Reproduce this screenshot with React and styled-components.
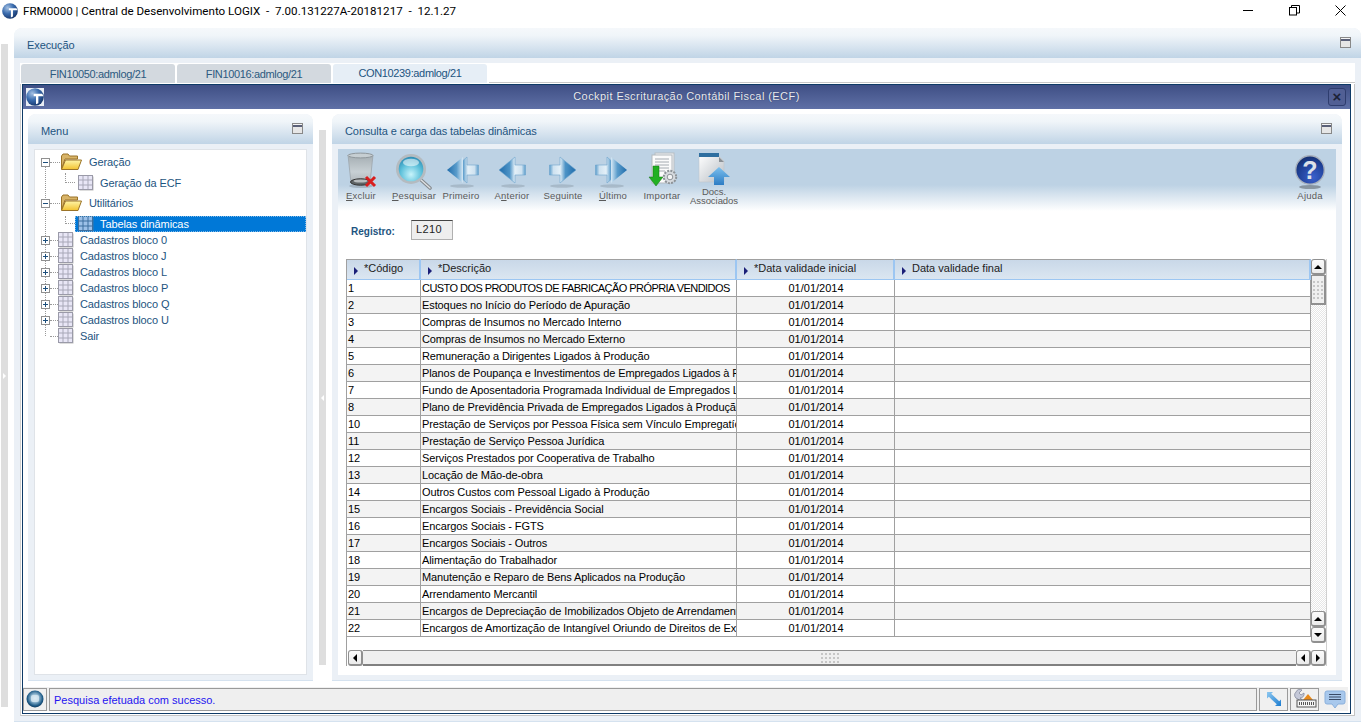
import styled, { createGlobalStyle } from "styled-components";

const GlobalStyle = createGlobalStyle`
  html, body { margin: 0; padding: 0; background: #fff; }
  * { box-sizing: border-box; }
  body { font-family: "Liberation Sans", Arial, sans-serif; font-size: 11px; overflow: hidden; }
`;

const rows = [
  ["1", "CUSTO DOS PRODUTOS DE FABRICAÇÃO PRÓPRIA VENDIDOS"],
  ["2", "Estoques no Início do Período de Apuração"],
  ["3", "Compras de Insumos no Mercado Interno"],
  ["4", "Compras de Insumos no Mercado Externo"],
  ["5", "Remuneração a Dirigentes Ligados à Produção"],
  ["6", "Planos de Poupança e Investimentos de Empregados Ligados à Produção"],
  ["7", "Fundo de Aposentadoria Programada Individual de Empregados Ligados à Produção"],
  ["8", "Plano de Previdência Privada de Empregados Ligados à Produção"],
  ["10", "Prestação de Serviços por Pessoa Física sem Vínculo Empregatício"],
  ["11", "Prestação de Serviço Pessoa Jurídica"],
  ["12", "Serviços Prestados por Cooperativa de Trabalho"],
  ["13", "Locação de Mão-de-obra"],
  ["14", "Outros Custos com Pessoal Ligado à Produção"],
  ["15", "Encargos Sociais - Previdência Social"],
  ["16", "Encargos Sociais - FGTS"],
  ["17", "Encargos Sociais - Outros"],
  ["18", "Alimentação do Trabalhador"],
  ["19", "Manutenção e Reparo de Bens Aplicados na Produção"],
  ["20", "Arrendamento Mercantil"],
  ["21", "Encargos de Depreciação de Imobilizados Objeto de Arrendamento"],
  ["22", "Encargos de Amortização de Intangível Oriundo de Direitos de Exploração"],
];

const blocks = ["0", "J", "L", "P", "Q", "U"];

/* ---------- icons ---------- */

const Globe = ({ size = 16, id = "g1" }) => (
  <svg width={size} height={size} viewBox="0 0 20 20">
    <defs>
      <radialGradient id={id} cx="35%" cy="30%" r="75%">
        <stop offset="0" stopColor="#a4c0e2" />
        <stop offset="0.5" stopColor="#3a6cae" />
        <stop offset="1" stopColor="#17356a" />
      </radialGradient>
    </defs>
    <circle cx="10" cy="10" r="9.8" fill={`url(#${id})`} />
    <path d="M8.5 6.5h9.5a9.8 9.8 0 0 1 1.3 2.6h-5.6V17l-2.6 1V9.1H8.5z" fill="#fff" />
  </svg>
);

const Orb = () => (
  <svg width="18" height="18" viewBox="0 0 18 18">
    <defs>
      <radialGradient id="orb" cx="50%" cy="45%" r="60%">
        <stop offset="0" stopColor="#e8f2f8" />
        <stop offset="0.4" stopColor="#8fb6d0" />
        <stop offset="0.75" stopColor="#1d5a86" />
        <stop offset="1" stopColor="#0a2a4a" />
      </radialGradient>
    </defs>
    <circle cx="9" cy="9" r="8.5" fill="url(#orb)" />
    <rect x="5" y="5" width="8" height="7" rx="2" fill="#d8e8f2" opacity="0.8" />
  </svg>
);

const GridIcon = ({ $selected }) => (
  <svg width="16" height="16" viewBox="0 0 16 16">
    <rect x="1.5" y="1.5" width="14" height="14" fill="#777" opacity="0.5" />
    <rect x="0.5" y="0.5" width="14" height="14" fill={$selected ? "#9cc0e8" : "#e8e6f6"} stroke={$selected ? "#3d6f9f" : "#9a9aa8"} />
    <path d="M5 1v13M10 1v13M1 5h13M1 10h13" stroke={$selected ? "#3d6f9f" : "#a8a8b8"} />
  </svg>
);

const FolderIcon = () => (
  <svg width="22" height="18" viewBox="0 0 22 18">
    <defs>
      <linearGradient id="fold" x1="0" y1="0" x2="0" y2="1">
        <stop offset="0" stopColor="#fff6a8" />
        <stop offset="1" stopColor="#f2c230" />
      </linearGradient>
    </defs>
    <path d="M1.5 16V3l1.5-2h5l1.5 2h8v3H5L1.5 16z" fill="#d8b468" stroke="#9a7328" />
    <path d="M1.5 16.5L5.5 7h16l-3.5 9.5z" fill="url(#fold)" stroke="#9a7328" />
  </svg>
);

const Trash = () => (
  <svg width="32" height="38" viewBox="0 0 32 38">
    <defs>
      <linearGradient id="bin" x1="0" y1="0" x2="0" y2="1">
        <stop offset="0" stopColor="#a4adb2" />
        <stop offset="0.6" stopColor="#c8d0d4" />
        <stop offset="1" stopColor="#aeb5b8" />
      </linearGradient>
    </defs>
    <ellipse cx="16" cy="34" rx="12" ry="2" fill="#000" opacity="0.15" />
    <path d="M3 3l3 28h19l3-28z" fill="url(#bin)" stroke="#98a0a6" strokeWidth="0.7" />
    <ellipse cx="15.5" cy="3.5" rx="12.5" ry="2.4" fill="#c6ced2" stroke="#8f979c" />
    <ellipse cx="15.5" cy="30" rx="10" ry="3.2" fill="#5f6466" stroke="#333" />
    <ellipse cx="15.5" cy="29" rx="7" ry="1.6" fill="#b8bcbe" />
    <path d="M21 25l9 9M30 25l-9 9" stroke="#d81e1e" strokeWidth="3" />
  </svg>
);

const Magnifier = () => (
  <svg width="38" height="36" viewBox="0 0 38 36">
    <defs>
      <radialGradient id="lens" cx="50%" cy="72%" r="72%">
        <stop offset="0" stopColor="#c8f4fb" />
        <stop offset="0.6" stopColor="#5cc0da" />
        <stop offset="1" stopColor="#2c8cb4" />
      </radialGradient>
    </defs>
    <path d="M25 25l10 9" stroke="#858a8f" strokeWidth="3.6" strokeLinecap="round" />
    <path d="M25 25l10 9" stroke="#dfe2e4" strokeWidth="1.3" strokeLinecap="round" />
    <circle cx="16" cy="15" r="15" fill="#b4bbc0" />
    <circle cx="16" cy="15" r="12.3" fill="url(#lens)" />
    <ellipse cx="16" cy="8.5" rx="8" ry="3.8" fill="#fff" opacity="0.55" />
  </svg>
);

/* points left unless $flip is set; $double adds the second head */
const Arrow = ({ $flip, $double, id }) => {
  const w = $double ? 36 : 30;
  return (
    <svg width={w} height="36" viewBox={`0 0 ${w} 36`}>
      <defs>
        <linearGradient id={id} x1="0" y1="0" x2="1" y2="0">
          <stop offset="0" stopColor="#1f6cab" />
          <stop offset="0.4" stopColor="#4d93c6" />
          <stop offset="0.6" stopColor="#e4f0f8" />
          <stop offset="0.85" stopColor="#cfe2f0" />
          <stop offset="1" stopColor="#5a9ccb" />
        </linearGradient>
        <linearGradient id={`${id}h`} x1="0" y1="0" x2="1" y2="0">
          <stop offset="0" stopColor="#1f6cab" />
          <stop offset="0.6" stopColor="#5a9ccb" />
          <stop offset="1" stopColor="#d8e9f5" />
        </linearGradient>
      </defs>
      <g transform={$flip ? `translate(${w},0) scale(-1,1)` : undefined}>
        <ellipse cx={w / 2 + 1} cy="32" rx="12" ry="1.8" fill="#000" opacity="0.12" />
        {$double ? (
          <>
            <path d="M24 3L9 16l15 13V21h11.5v-10H24z" fill={`url(#${id})`} stroke="#6fa5cc" strokeWidth="0.6" />
            <path d="M20 3L4 16l16 13z" fill={`url(#${id}h)`} />
          </>
        ) : (
          <path d="M18 3L2 16l16 13V21h10.5v-10H18z" fill={`url(#${id})`} stroke="#6fa5cc" strokeWidth="0.6" />
        )}
      </g>
    </svg>
  );
};

const ImportIcon = () => (
  <svg width="32" height="38" viewBox="0 0 32 38">
    <rect x="9" y="1" width="19" height="26" fill="#eef0f2" stroke="#b8bdc2" />
    <rect x="6" y="3" width="20" height="28" fill="#fbfbfb" stroke="#b4b9be" />
    <path d="M9 7h14M9 10h14M9 13h14M9 16h14M9 19h10" stroke="#a4aab0" />
    <path d="M7 14h6v11h4l-7 9-7-9h4z" fill="#22b022" stroke="#167016" strokeWidth="0.5" />
    <circle cx="24" cy="25" r="6.2" fill="#d6dade" stroke="#8d9398" strokeDasharray="2 1.2" strokeWidth="2" />
    <circle cx="24" cy="25" r="2.8" fill="#f4f5f6" stroke="#8d9398" />
  </svg>
);

const DocsIcon = () => (
  <svg width="32" height="38" viewBox="0 0 32 38">
    <defs>
      <linearGradient id="doc" x1="0" y1="0" x2="1" y2="1">
        <stop offset="0" stopColor="#ffffff" />
        <stop offset="1" stopColor="#b8bec4" />
      </linearGradient>
      <linearGradient id="up" x1="0" y1="0" x2="0" y2="1">
        <stop offset="0" stopColor="#7cc0ee" />
        <stop offset="1" stopColor="#2c7cc4" />
      </linearGradient>
    </defs>
    <path d="M1 3h19l6 6v21H1z" fill="url(#doc)" stroke="#c0c6cc" strokeWidth="0.6" />
    <rect x="1" y="1" width="20" height="4" fill="#2f6fa0" />
    <path d="M21 5l5 5h-5z" fill="#8a9096" />
    <path d="M21 15l11 10h-6v8H16v-8h-6z" fill="url(#up)" />
  </svg>
);

const HelpIcon = () => (
  <svg width="32" height="36" viewBox="0 0 32 36">
    <defs>
      <radialGradient id="help" cx="60%" cy="75%" r="75%">
        <stop offset="0" stopColor="#3a60cc" />
        <stop offset="0.7" stopColor="#1e3f94" />
        <stop offset="1" stopColor="#16306e" />
      </radialGradient>
    </defs>
    <ellipse cx="16" cy="33" rx="11" ry="2" fill="#000" opacity="0.3" />
    <circle cx="16" cy="16" r="14.3" fill="url(#help)" stroke="#a8b0bc" strokeWidth="1.4" />
    <text x="16" y="25" textAnchor="middle" fontFamily="Liberation Sans, sans-serif" fontWeight="700" fontSize="25" fill="#dde1e8">?</text>
  </svg>
);

const ResizeIcon = () => (
  <svg width="16" height="16" viewBox="0 0 16 16">
    <defs>
      <linearGradient id="rz" x1="0" y1="0" x2="1" y2="1">
        <stop offset="0" stopColor="#8ec8f0" />
        <stop offset="1" stopColor="#1c7cd0" />
      </linearGradient>
    </defs>
    <path d="M1 1h6L5.2 2.8l8 7.4L15 8.5V15H9l1.8-1.8-8-7.4L1 7.5z" fill="url(#rz)" />
  </svg>
);

const ConfigIcon = () => (
  <svg width="24" height="20" viewBox="0 0 24 20">
    <path d="M3 3a4 4 0 0 1 6-2L6 4l2 2 3-2a4 4 0 0 1-4 5l6 5-2 2-6-6a4 4 0 0 1-2-7z" fill="#c4c8d8" stroke="#7d8296" strokeWidth="0.7" />
    <path d="M15 5l5 6H10z" fill="#e88a1c" />
    <rect x="4" y="11" width="19" height="7" fill="#f4f4f4" stroke="#555" />
    <path d="M6 14.5h15" stroke="#555" strokeDasharray="1 1" strokeWidth="3" />
  </svg>
);

const ChatIcon = () => (
  <svg width="22" height="19" viewBox="0 0 22 19">
    <path d="M3 1h16a2 2 0 0 1 2 2v9a2 2 0 0 1-2 2h-5l-3 4-3-4H3a2 2 0 0 1-2-2V3a2 2 0 0 1 2-2z" fill="#a8c8ec" stroke="#8ab0dc" />
    <path d="M5 4.5h12M5 7h12M5 9.5h12" stroke="#3a4a66" />
  </svg>
);

const WinMin = () => (
  <svg width="11" height="11" viewBox="0 0 11 11"><path d="M0 5.5h10" stroke="#000" /></svg>
);
const WinRestore = () => (
  <svg width="11" height="11" viewBox="0 0 11 11" fill="none" stroke="#000">
    <rect x="0.5" y="2.5" width="7" height="7.5" />
    <path d="M2.5 2.5V0.5h8v7.5H8" />
  </svg>
);
const WinClose = () => (
  <svg width="11" height="11" viewBox="0 0 11 11"><path d="M0.5 0.5l10 10M10.5 0.5l-10 10" stroke="#000" /></svg>
);

/* ---------- components ---------- */

const Tree = ({ children }) => <TreeBox>{children}</TreeBox>;

const App = () => {
  return (
    <Page>
      <GlobalStyle />
      <TitleBar>
        <LogoSlot><Globe id="g-title" /></LogoSlot>
        <TitleText>{"FRM0000 | Central de Desenvolvimento LOGIX  -  7.00.131227A-20181217  -  12.1.27"}</TitleText>
        <WinButtons>
          <WinButton><WinMin /></WinButton>
          <WinButton><WinRestore /></WinButton>
          <WinButton><WinClose /></WinButton>
        </WinButtons>
      </TitleBar>
      <Main>
        <SideStrip><Nub /></SideStrip>
        <Outer>
          <PanelHead>
            <HeadTitle>Execução</HeadTitle>
            <Collapse />
          </PanelHead>
          <OuterBody>
            <TabRow>
              <Tab>FIN10050:admlog/21</Tab>
              <Tab>FIN10016:admlog/21</Tab>
              <Tab $active>CON10239:admlog/21</Tab>
              <TabFill />
            </TabRow>
            <TabPage>
              <Window>
                <WindowTitle>
                  <WindowLogo><Globe size={18} id="g-win" /></WindowLogo>
                  <WindowCaption>Cockpit Escrituração Contábil Fiscal (ECF)</WindowCaption>
                  <CloseBtn>×</CloseBtn>
                </WindowTitle>
                <WindowBody>
                  <Panel $w={285}>
                    <PanelHead>
                      <HeadTitle>Menu</HeadTitle>
                      <Collapse />
                    </PanelHead>
                    <PanelBody>
                      <Tree>
                        <TreeRail />
                        <FolderRow>
                          <Expander $open />
                          <HDots $w={10} />
                          <FolderIcon />
                          <FolderLabel>Geração</FolderLabel>
                        </FolderRow>
                        <ChildRow $mt={1} $h={20}>
                          <Elbow $h={10} />
                          <ChildBody>
                            <GridIcon />
                            <NodeLabel>Geração da ECF</NodeLabel>
                          </ChildBody>
                        </ChildRow>
                        <FolderRow>
                          <Expander $open />
                          <HDots $w={10} />
                          <FolderIcon />
                          <FolderLabel>Utilitários</FolderLabel>
                        </FolderRow>
                        <ChildRow $mt={3} $h={16}>
                          <Elbow $h={8} />
                          <ChildBody $selected>
                            <GridIcon $selected />
                            <NodeLabel $selected>Tabelas dinâmicas</NodeLabel>
                          </ChildBody>
                        </ChildRow>
                        {blocks.map((b) => (
                          <BlockRow key={b}>
                            <Expander />
                            <HDots $w={8} />
                            <GridIcon />
                            <NodeLabel>Cadastros bloco {b}</NodeLabel>
                          </BlockRow>
                        ))}
                        <BlockRow>
                          <ExpanderGap />
                          <HDots $w={8} />
                          <GridIcon />
                          <NodeLabel>Sair</NodeLabel>
                        </BlockRow>
                      </Tree>
                    </PanelBody>
                  </Panel>
                  <Splitter><Nub $left /></Splitter>
                  <Panel $w={1010}>
                    <PanelHead>
                      <HeadTitle>Consulta e carga das tabelas dinâmicas</HeadTitle>
                      <Collapse />
                    </PanelHead>
                    <PanelBody>
                      <Sheet>
                        <Toolbar>
                          <Tool $w={46}><IconSlot><Trash /></IconSlot><ToolLabel><u>E</u>xcluir</ToolLabel></Tool>
                          <Tool $w={60}><IconSlot><Magnifier /></IconSlot><ToolLabel><u>P</u>esquisar</ToolLabel></Tool>
                          <Tool $w={34}><IconSlot><Arrow $double id="a1" /></IconSlot><ToolLabel>Primeiro</ToolLabel></Tool>
                          <Tool $w={68}><IconSlot><Arrow id="a2" /></IconSlot><ToolLabel>A<u>n</u>terior</ToolLabel></Tool>
                          <Tool $w={34}><IconSlot><Arrow $flip id="a3" /></IconSlot><ToolLabel>Se<u>g</u>uinte</ToolLabel></Tool>
                          <Tool $w={66}><IconSlot><Arrow $flip $double id="a4" /></IconSlot><ToolLabel><u>Ú</u>ltimo</ToolLabel></Tool>
                          <Tool $w={32}><IconSlot><ImportIcon /></IconSlot><ToolLabel>Importar</ToolLabel></Tool>
                          <Tool $w={72}><IconSlot><DocsIcon /></IconSlot><ToolLabel $tight>Docs.<br />Associados</ToolLabel></Tool>
                          <ToolSpacer />
                          <Tool $w={52}><IconSlot><HelpIcon /></IconSlot><ToolLabel>Ajuda</ToolLabel></Tool>
                        </Toolbar>
                        <FormRow>
                          <FieldLabel>Registro:</FieldLabel>
                          <FieldBox>L210</FieldBox>
                        </FormRow>
                        <GridFrame>
                          <GridMain>
                            <TableWrap>
                              <Table>
                                <colgroup>
                                  <col width="74" />
                                  <col width="316" />
                                  <col width="158" />
                                  <col width="416" />
                                </colgroup>
                                <thead>
                                  <tr>
                                    <Th><SortMark />*Código</Th>
                                    <Th><SortMark />*Descrição</Th>
                                    <Th><SortMark />*Data validade inicial</Th>
                                    <Th><SortMark />Data validade final</Th>
                                  </tr>
                                </thead>
                                <tbody>
                                  {rows.map(([code, desc], i) => (
                                    <Tr key={code} $odd={i % 2 === 1}>
                                      <Td>{code}</Td>
                                      <Td $spacing={i === 0 ? -0.56 : -0.1}>{desc}</Td>
                                      <Td $center>01/01/2014</Td>
                                      <Td />
                                    </Tr>
                                  ))}
                                </tbody>
                              </Table>
                            </TableWrap>
                            <VScroll>
                              <ScrollBtn $dir="up" />
                              <VThumb><Grip $w={12} $h={20} /></VThumb>
                              <Track />
                              <ScrollBtn $dir="up" />
                              <ScrollBtn $dir="down" />
                              <ScrollEnd />
                            </VScroll>
                          </GridMain>
                          <HScroll>
                            <ScrollBtn $dir="left" />
                            <HThumb><Grip $w={20} $h={12} /></HThumb>
                            <ScrollBtn $dir="left" />
                            <ScrollBtn $dir="right" />
                          </HScroll>
                        </GridFrame>
                      </Sheet>
                    </PanelBody>
                  </Panel>
                </WindowBody>
                <StatusBar>
                  <StatusOrb><Orb /></StatusOrb>
                  <StatusMsg>Pesquisa efetuada com sucesso.</StatusMsg>
                  <StatusBtn><ResizeIcon /></StatusBtn>
                  <StatusBtn><ConfigIcon /></StatusBtn>
                  <ChatSlot><ChatIcon /></ChatSlot>
                </StatusBar>
              </Window>
            </TabPage>
          </OuterBody>
        </Outer>
      </Main>
    </Page>
  );
};

export default App;

const Page = styled.div`
  width: 1366px;
  height: 728px;
  display: flex;
  flex-direction: column;
  background: #fff;
  overflow: hidden;
`;

const TitleBar = styled.div`
  height: 28px;
  flex: none;
  display: flex;
  align-items: flex-start;
  padding-left: 2px;
`;

const LogoSlot = styled.div`
  width: 21px;
  height: 16px;
  margin-top: 3px;
`;

const TitleText = styled.div`
  margin-top: 3px;
  line-height: 16px;
  font-family: Roboto, "Noto Sans", sans-serif;
  font-size: 11.6px;
  color: #000;
  white-space: pre;
`;

const WinButtons = styled.div`
  margin-left: auto;
  margin-top: 5px;
  margin-right: 20px;
  display: flex;
  gap: 35px;
`;

const WinButton = styled.div`
  width: 11px;
  height: 11px;
  display: flex;
`;

const Main = styled.div`
  flex: 1;
  display: flex;
  min-height: 0;
  padding: 0 5px 6px 1px;
`;

const SideStrip = styled.div`
  width: 7px;
  height: 663px;
  margin-top: 16px;
  margin-right: 6px;
  background: #dedede;
  display: flex;
  align-items: center;
  justify-content: center;
`;

const Nub = styled.span`
  width: 0;
  height: 0;
  border-top: 3px solid transparent;
  border-bottom: 3px solid transparent;
  ${(p) => (p.$left ? "border-right: 3px solid #fff;" : "border-left: 3px solid #fff;")}
`;

const Outer = styled.div`
  flex: 1;
  display: flex;
  flex-direction: column;
  background: #ebf0f6;
  border-radius: 8px 8px 0 0;
  border-bottom: 1px solid #d5e2ef;
`;

const PanelHead = styled.div`
  height: 30px;
  flex: none;
  display: flex;
  align-items: center;
  justify-content: space-between;
  padding: 0 10px 0 13px;
  border-radius: 8px 8px 0 0;
  background: linear-gradient(#f5f8fb 0%, #f0f5f9 25%, #c0d4e6 100%);
`;

const HeadTitle = styled.div`
  margin-top: 4px;
  color: #1d5480;
  font-size: 11px;
  letter-spacing: -0.09px;
`;

const Collapse = styled.div`
  width: 11px;
  height: 11px;
  margin-top: -1px;
  border: 1px solid #888;
  background: linear-gradient(#f4f4f4 0 1px, #5a6078 1px 3px, #e6e6e6 3px 100%);
`;

const OuterBody = styled.div`
  flex: 1;
  display: flex;
  flex-direction: column;
  padding: 5px 6px 5px 6px;
  min-height: 0;
`;

const TabRow = styled.div`
  height: 21px;
  flex: none;
  display: flex;
  background: #fff;
  padding: 1px 0 0 1px;
  gap: 2px;
`;

const Tab = styled.div`
  width: 154px;
  height: 19px;
  line-height: ${(p) => (p.$active ? "18px" : "20px")};
  text-align: center;
  font-size: 11px;
  letter-spacing: -0.35px;
  border-radius: 3px 3px 0 0;
  color: ${(p) => (p.$active ? "#1d5480" : "#2c5a80")};
  background: ${(p) => (p.$active ? "#e6eef6" : "#d3d9df")};
`;

const TabFill = styled.div`
  flex: 1;
  height: 19px;
  border-bottom: 1px solid #c8c8c8;
`;

const TabPage = styled.div`
  flex: 1;
  min-height: 0;
  display: flex;
  background: #fff;
  padding: 0 3px 1px 1px;
  border-left: 1px solid #cfcfcf;
  border-right: 1px solid #c4c4c4;
  border-bottom: 1px solid #c4c4c4;
`;

const Window = styled.div`
  flex: 1;
  display: flex;
  flex-direction: column;
  background: #fff;
  border: 1px solid #0e3a66;
  min-width: 0;
`;

const WindowTitle = styled.div`
  height: 24px;
  flex: none;
  position: relative;
  display: flex;
  align-items: center;
  justify-content: center;
  background: linear-gradient(#3f4f85, #5f70a6);
`;

const WindowLogo = styled.div`
  position: absolute;
  left: 3px;
  top: 3px;
  width: 18px;
  height: 18px;
  background: #e8edf4;
  display: flex;
`;

const WindowCaption = styled.div`
  margin-top: -2px;
  color: #e9ecf2;
  font-size: 11px;
  letter-spacing: 0.43px;
  text-shadow: 0 0 1px #26305a;
`;

const CloseBtn = styled.div`
  position: absolute;
  right: 4px;
  top: 3px;
  width: 18px;
  height: 18px;
  border: 1px solid #2e3d6e;
  border-radius: 3px;
  color: #1c2238;
  background: #515f94;
  font-weight: 700;
  font-size: 15px;
  line-height: 15px;
  text-align: center;
`;

const WindowBody = styled.div`
  height: 572px;
  flex: none;
  display: flex;
  padding: 5px 7px 0 5px;
  gap: 6px;
`;

const Panel = styled.div`
  width: ${(p) => p.$w}px;
  flex: none;
  display: flex;
  flex-direction: column;
  background: #ebf0f6;
  border-radius: 8px 8px 0 0;
  border-bottom: 1px solid #d5e2ef;
`;

const PanelBody = styled.div`
  flex: 1;
  display: flex;
  padding: 5px 6px;
  min-height: 0;
`;

const TreeBox = styled.div`
  flex: 1;
  position: relative;
  background: #fff;
  border: 1px solid #dfe3e8;
  padding: 2px 0 0 6px;
  color: #1d5480;
`;

const TreeRail = styled.div`
  position: absolute;
  left: 10px;
  top: 14px;
  height: 172px;
  border-left: 1px dotted #999;
`;

const FolderRow = styled.div`
  height: 20px;
  display: flex;
  align-items: center;
`;

const ChildRow = styled.div`
  height: ${(p) => p.$h}px;
  margin-top: ${(p) => p.$mt}px;
  display: flex;
  padding-left: 24px;
`;

const BlockRow = styled.div`
  height: 16px;
  display: flex;
  align-items: center;
`;

const Expander = styled.span`
  position: relative;
  z-index: 1;
  flex: none;
  width: 9px;
  height: 9px;
  background:
    linear-gradient(#1d4f7c, #1d4f7c) center/5px 1px no-repeat,
    ${(p) => (p.$open ? "" : "linear-gradient(#1d4f7c, #1d4f7c) center/1px 5px no-repeat,")}
    #fff;
  border: 1px solid #909090;
`;

const ExpanderGap = styled.span`
  flex: none;
  width: 9px;
`;

const HDots = styled.span`
  flex: none;
  width: ${(p) => p.$w}px;
  border-top: 1px dotted #999;
`;

const FolderLabel = styled.span`
  margin-left: 7px;
  letter-spacing: -0.1px;
`;

const Elbow = styled.span`
  flex: none;
  width: 10px;
  height: ${(p) => p.$h}px;
  border-left: 1px dotted #999;
  border-bottom: 1px dotted #999;
`;

const ChildBody = styled.div`
  flex: 1;
  display: flex;
  align-items: center;
  padding-left: 3px;
  background: ${(p) => (p.$selected ? "#0078d7" : "transparent")};
  outline: ${(p) => (p.$selected ? "1px dotted #7fb8e6" : "none")};
  outline-offset: -1px;
`;

const NodeLabel = styled.span`
  margin-left: 6px;
  letter-spacing: -0.1px;
  color: ${(p) => (p.$selected ? "#fff" : "#1d5480")};
`;

const Splitter = styled.div`
  width: 7px;
  height: 535px;
  margin-top: 16px;
  flex: none;
  background: #dedede;
  display: flex;
  align-items: center;
  justify-content: center;
`;

const Sheet = styled.div`
  flex: 1;
  display: flex;
  flex-direction: column;
  background: #fff;
  min-width: 0;
`;

const Toolbar = styled.div`
  height: 62px;
  flex: none;
  display: flex;
  background: linear-gradient(#bdd2e4 0%, #bdd2e4 58%, #ffffff 100%);
`;

const ToolSpacer = styled.div`
  flex: 1;
`;

const Tool = styled.div`
  width: ${(p) => p.$w}px;
  flex: none;
  display: flex;
  flex-direction: column;
  align-items: center;
  padding-top: 3px;
`;

const IconSlot = styled.div`
  height: 38px;
  display: flex;
  align-items: flex-end;
  justify-content: center;
`;

const ToolLabel = styled.div`
  font-size: 9.5px;
  line-height: ${(p) => (p.$tight ? "9px" : "12px")};
  margin-top: ${(p) => (p.$tight ? "-3px" : "0")};
  color: #5a5a5a;
  white-space: nowrap;
  text-align: center;
  letter-spacing: ${(p) => (p.$tight ? "-0.05px" : "0.2px")};
`;

const FormRow = styled.div`
  height: 48px;
  flex: none;
  display: flex;
  padding: 9px 0 0 13px;
  align-items: flex-start;
`;

const FieldLabel = styled.div`
  width: 60px;
  font-weight: 700;
  font-size: 10px;
  line-height: 24px;
  color: #1d5480;
`;

const FieldBox = styled.div`
  width: 42px;
  height: 20px;
  background: #eeeeee;
  border: 1px solid #b0b0b0;
  border-top-color: #444;
  font-size: 11px;
  letter-spacing: 0.4px;
  line-height: 17px;
  padding-left: 4px;
  color: #222;
`;

const GridFrame = styled.div`
  width: 981px;
  height: 407px;
  margin-left: 8px;
  flex: none;
  display: flex;
  flex-direction: column;
`;

const GridMain = styled.div`
  flex: 1;
  display: flex;
  min-height: 0;
`;

const TableWrap = styled.div`
  width: 965px;
  flex: none;
  overflow: hidden;
  border-left: 1px solid #a0a0a0;
`;

const Table = styled.table`
  width: 964px;
  table-layout: fixed;
  border-collapse: separate;
  border-spacing: 0;
  font-size: 11px;
`;

const Th = styled.th`
  height: 21px;
  padding: 0 0 3px 7px;
  text-align: left;
  font-weight: 400;
  color: #222;
  white-space: nowrap;
  overflow: hidden;
  border-top: 1px solid #a0a0a0;
  border-right: 2px solid #9cc6f2;
  border-bottom: 1px solid #9cc6f2;
  background: linear-gradient(#c9d8e8, #dbe6f1);
`;

const SortMark = styled.span`
  display: inline-block;
  vertical-align: -3px;
  margin-right: 6px;
  width: 0;
  height: 0;
  border-left: 4px solid #1b1f78;
  border-top: 4px solid transparent;
  border-bottom: 4px solid transparent;
`;

const Tr = styled.tr`
  background: ${(p) => (p.$odd ? "#f3f3f3" : "#fff")};
`;

const Td = styled.td`
  height: 17px;
  padding: 0 0 0 1px;
  color: #000;
  line-height: 16px;
  white-space: nowrap;
  overflow: hidden;
  letter-spacing: ${(p) => p.$spacing || 0}px;
  text-align: ${(p) => (p.$center ? "center" : "left")};
  border-right: 1px solid #a0a0a0;
  border-bottom: 1px solid #a0a0a0;
`;

const VScroll = styled.div`
  width: 16px;
  flex: none;
  display: flex;
  flex-direction: column;
  border-right: 1px solid #d0d0d0;
`;

const ScrollBtn = styled.div`
  width: 15px;
  height: 16px;
  flex: none;
  display: flex;
  align-items: center;
  justify-content: center;
  background: linear-gradient(#fbfbfb, #ebebeb);
  border: 1px solid #909090;
  border-right-width: 2px;
  border-bottom-width: 2px;
  border-radius: 3px;
  &::before {
    content: "";
    width: 0;
    height: 0;
    border: 4px solid transparent;
    ${(p) =>
      p.$dir === "up" ? "border-bottom-color:#000;border-top-width:0;" : ""}
    ${(p) =>
      p.$dir === "down" ? "border-top-color:#000;border-bottom-width:0;" : ""}
    ${(p) =>
      p.$dir === "left" ? "border-right-color:#000;border-left-width:0;" : ""}
    ${(p) =>
      p.$dir === "right" ? "border-left-color:#000;border-right-width:0;" : ""}
  }
`;

const VThumb = styled.div`
  width: 15px;
  height: 30px;
  flex: none;
  display: flex;
  align-items: center;
  justify-content: center;
  background: #efefef;
  border: 1px solid #909090;
  border-right-width: 2px;
  border-bottom-width: 2px;
`;

const Grip = styled.div`
  width: ${(p) => p.$w}px;
  height: ${(p) => p.$h}px;
  background: radial-gradient(circle, #c6c6c6 1px, transparent 1px) 0 0/4px 4px;
`;

const Track = styled.div`
  flex: 1;
  background: repeating-conic-gradient(#e6e6e6 0 25%, #fff 0 50%) 0 0/2px 2px;
`;

const ScrollEnd = styled.div`
  height: 7px;
  flex: none;
`;

const HScroll = styled.div`
  height: 16px;
  flex: none;
  display: flex;
  padding-left: 1px;
  border-left: 1px solid #a0a0a0;
  border-right: 1px solid #d0d0d0;
`;

const HThumb = styled.div`
  flex: 1;
  display: flex;
  align-items: center;
  justify-content: center;
  background: #efefef;
  border-top: 1px solid #909090;
  border-bottom: 2px solid #808080;
`;

const StatusBar = styled.div`
  height: 24px;
  margin: 6px 2px 3px 0;
  flex: none;
  display: flex;
  gap: 2px;
  background: #f0f0f0;
  align-items: center;
`;

const StatusOrb = styled.div`
  width: 24px;
  height: 23px;
  display: flex;
  align-items: center;
  justify-content: center;
  border: 1px solid #9a9a9a;
`;

const StatusMsg = styled.div`
  flex: 1;
  height: 23px;
  padding-left: 4px;
  line-height: 22px;
  font-size: 11px;
  color: #2414f0;
  border: 1px solid #9a9a9a;
  background: #efefef;
`;

const StatusBtn = styled.div`
  width: 29px;
  height: 23px;
  display: flex;
  align-items: center;
  justify-content: center;
  border: 1px solid #9a9a9a;
`;

const ChatSlot = styled.div`
  width: 27px;
  display: flex;
  justify-content: center;
`;
